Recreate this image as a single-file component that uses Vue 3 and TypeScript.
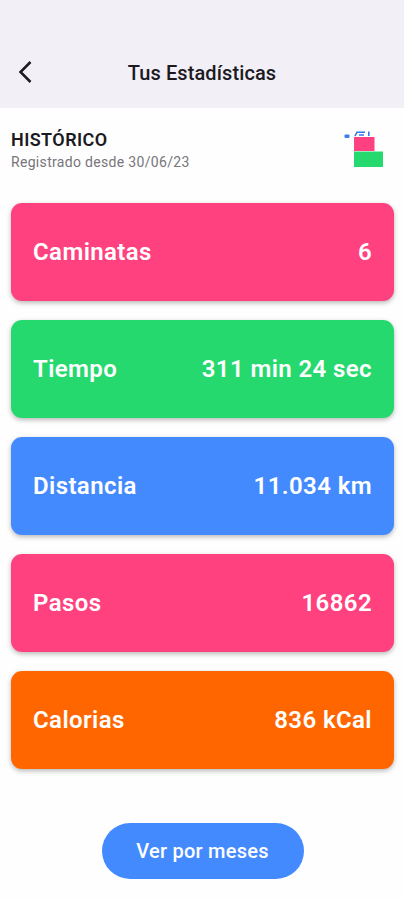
<script setup lang="ts">
interface Stat {
  label: string
  value: string
  tone: string
}

const stats: Stat[] = [
  { label: 'Caminatas', value: '6', tone: 'pink' },
  { label: 'Tiempo', value: '311 min 24 sec', tone: 'green' },
  { label: 'Distancia', value: '11.034 km', tone: 'blue' },
  { label: 'Pasos', value: '16862', tone: 'pink' },
  { label: 'Calorias', value: '836 kCal', tone: 'orange' },
]
</script>

<template>
  <div class="screen">
    <header class="bar">
      <button class="back" aria-label="Volver">
        <svg width="14" height="24" viewBox="0 0 14 24" fill="none" stroke="#1c1a1f" stroke-width="2.5">
          <path d="M12.500 2 L2.500 12 L12.500 22" />
        </svg>
      </button>
      <h1 class="title">Tus Estadísticas</h1>
    </header>
    <section class="summary">
      <div>
        <h2 class="heading">HISTÓRICO</h2>
        <p class="since">Registrado desde 30/06/23</p>
      </div>
      <svg class="logo" width="40" height="38" viewBox="0 0 40 38">
        <rect x="1.5" y="4.5" width="5" height="3.5" rx="1" fill="#3d7fe8" />
        <path d="M12 6 L14 2.2 H22 M16 5 H21 M25.8 1.5 V6" fill="none" stroke="#2f78e6" stroke-width="1.6" />
        <rect x="11" y="7" width="20.500" height="14" fill="#ff4081" />
        <rect x="11" y="21.500" width="29" height="15.500" fill="#25d96e" />
      </svg>
    </section>
    <main class="cards">
      <article v-for="stat in stats" :key="stat.label" class="card" :class="stat.tone">
        <span>{{ stat.label }}</span>
        <span>{{ stat.value }}</span>
      </article>
    </main>
    <footer class="actions">
      <button class="months">Ver por meses</button>
    </footer>
  </div>
</template>

<style>
body {
  background: #fefefe;
}
</style>

<style scoped>
.screen {
  width: 404px;
  height: 900px;
  overflow: hidden;
  box-sizing: border-box;
  background: #fefefe;
  color: #1c1a1f;
  font-family: Roboto, sans-serif;
}
.bar {
  height: 108px;
  padding: 36px 0 0;
  box-sizing: border-box;
  display: grid;
  grid-template-columns: 52px 1fr 52px;
  align-items: center;
  background: #f2eff7;
}
button {
  border: 0;
  padding: 0;
  background: none;
  font-family: inherit;
}
.back {
  display: flex;
  padding-left: 18px;
}
.title {
  margin: 0;
  padding-top: 1px;
  text-align: center;
  font-size: 20px;
  font-weight: 500;
  line-height: 24px;
  letter-spacing: 0.1px;
}
.summary {
  height: 95px;
  padding: 22px 21px 0 11px;
  box-sizing: border-box;
  display: flex;
  justify-content: space-between;
}
.heading {
  margin: 0;
  font-size: 18px;
  font-weight: 600;
  line-height: 20px;
  letter-spacing: 0.4px;
}
.since {
  margin: 3px 0 0;
  font-size: 14px;
  line-height: 18px;
  letter-spacing: 0.32px;
  color: #77757a;
}
.cards {
  display: grid;
  gap: 19px;
  padding: 0 10px 0 11px;
}
.card {
  height: 98px;
  padding: 0 22px;
  box-sizing: border-box;
  display: flex;
  align-items: center;
  justify-content: space-between;
  border-radius: 11px;
  box-shadow: 0 2px 5px rgba(0, 0, 0, 0.28);
  color: #fff;
  font-size: 24px;
  font-weight: 600;
  letter-spacing: 0.4px;
}
.pink { background: #ff4180; }
.green { background: #26d96e; }
.blue { background: #448aff; }
.orange { background: #ff6600; }
.actions {
  display: flex;
  justify-content: center;
  padding: 54px 0 0 1px;
}
.months {
  width: 202px;
  height: 56px;
  border-radius: 28px;
  background: #448aff;
  color: #fff;
  font-size: 20px;
  font-weight: 500;
  letter-spacing: 0.25px;
}
</style>
